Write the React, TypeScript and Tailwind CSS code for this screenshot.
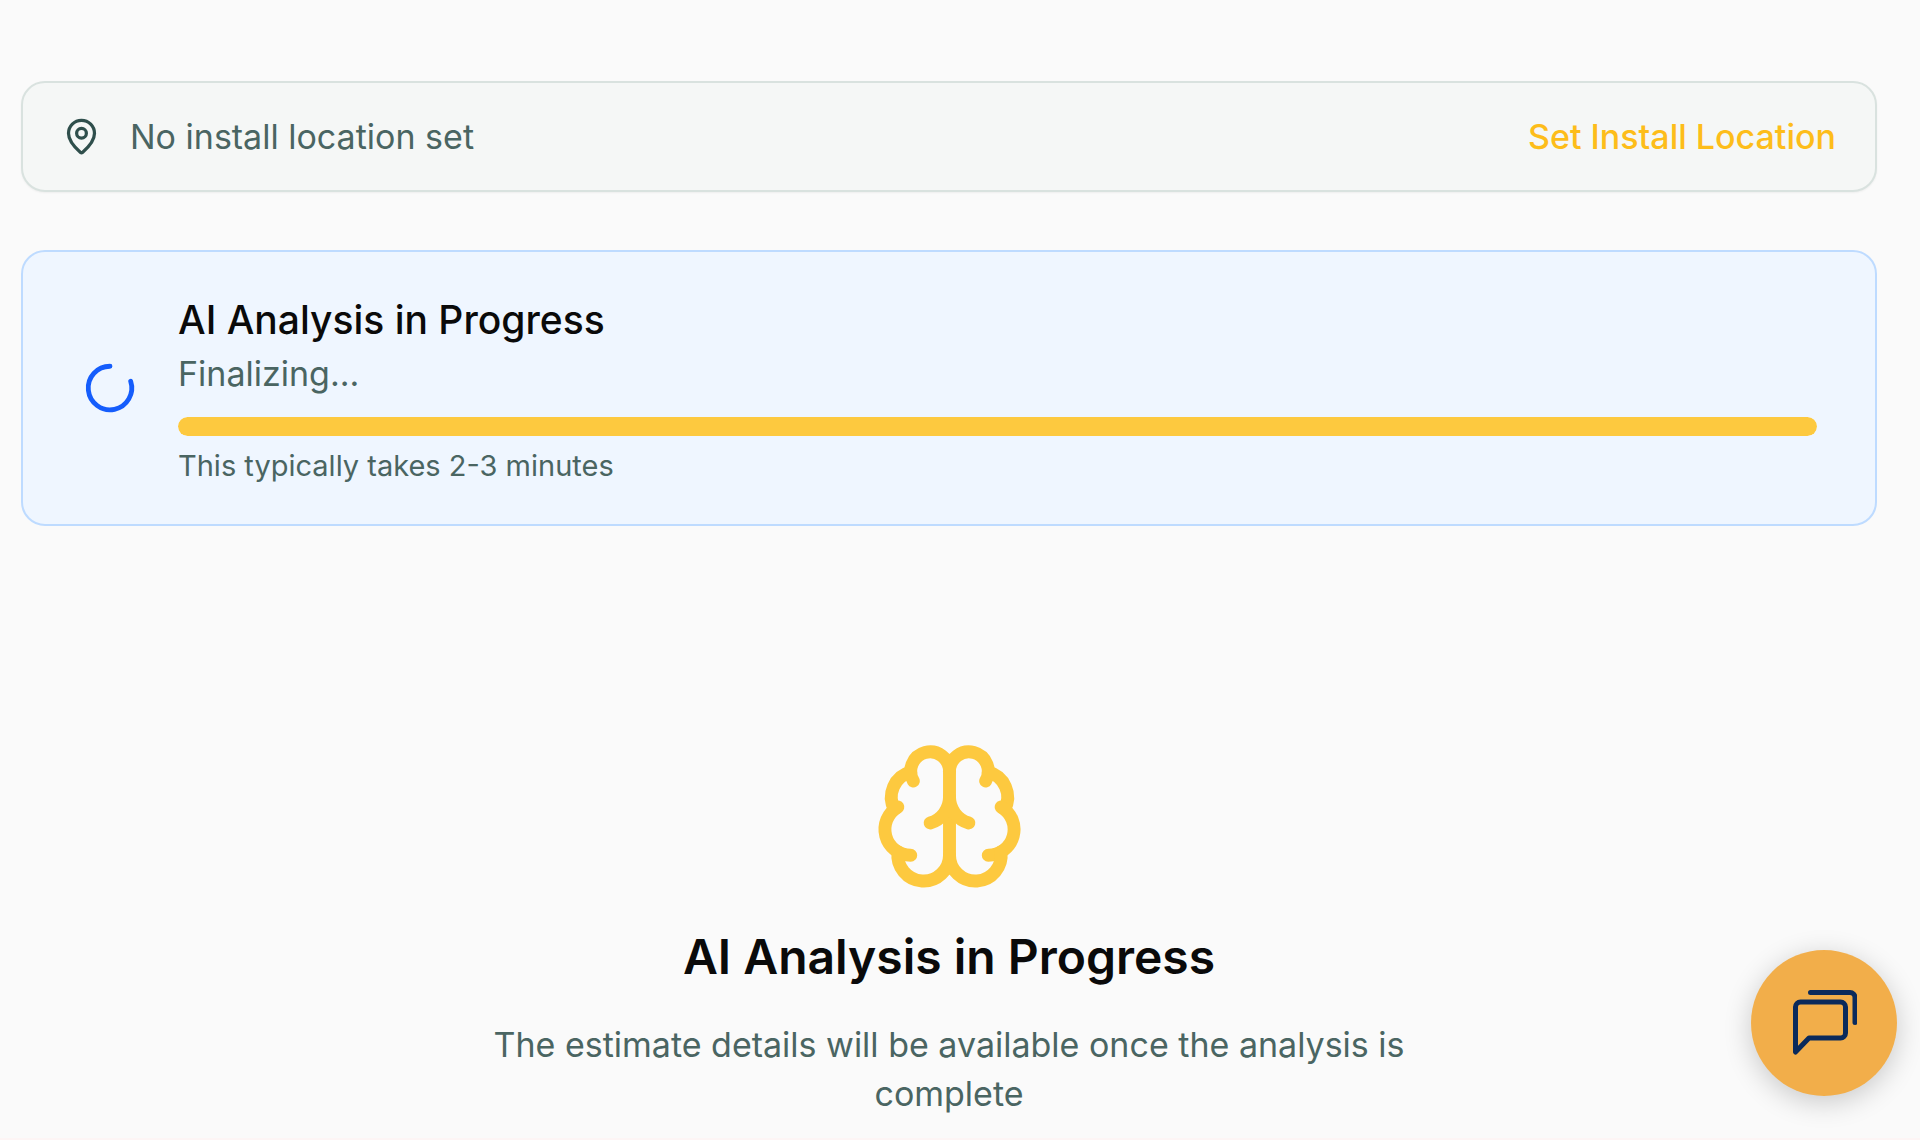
import React from 'react';
import { Brain, LoaderCircle, MapPin } from 'lucide-react';

const LocationBar: React.FC = () => {
  return (
    <div className="flex items-center justify-between gap-7 rounded-3xl border-2 border-[#d9e2df] bg-[#f5f7f6] px-[39px] py-[29px] shadow-xs">
      <div className="flex items-center gap-[29px]">
        <MapPin className="size-[39px] shrink-0 text-[#2f4f4c]" aria-hidden="true" />
        <span className="text-[34px] leading-[49px] text-[#4a6562]">No install location set</span>
      </div>
      <button type="button" className="text-[34px] font-medium leading-[49px] text-[#fdbd1a]">
        Set Install Location
      </button>
    </div>
  );
};

interface AnalysisCardProps {
  status: string;
  progress: number;
}

const AnalysisCard: React.FC<AnalysisCardProps> = ({ status, progress }) => {
  return (
    <div className="flex items-center gap-[39px] rounded-3xl border-2 border-[#bedbff] bg-[#eff6ff] px-[58px] py-[39px]">
      <LoaderCircle className="size-[58px] shrink-0 -rotate-18 text-[#155dfc]" aria-hidden="true" />
      <div className="flex-1">
        <h3 className="text-[39px] font-medium leading-[58px] text-[#0a0a0a]">AI Analysis in Progress</h3>
        <p className="text-[34px] leading-[49px] text-[#4a6562]">{status}</p>
        <div
          className="mt-[19px] h-[19px] overflow-hidden rounded-full bg-[#fdecc0]"
          role="progressbar"
          aria-label="Analysis progress"
          aria-valuenow={progress}
        >
          <div className="h-full rounded-full bg-[#fdc93f]" style={{ width: `${progress}%` }} />
        </div>
        <p className="mt-2.5 text-[29px] leading-[39px] text-[#4a6562]">This typically takes 2-3 minutes</p>
      </div>
    </div>
  );
};

const EmptyState: React.FC = () => {
  return (
    <div className="flex flex-col items-center pt-[213px] text-center">
      <Brain className="size-[155px] text-[#fdc93f]" aria-hidden="true" />
      <h2 className="mt-[29px] text-[48px] font-semibold leading-[68px] text-[#0a0a0a]">AI Analysis in Progress</h2>
      <p className="mt-[29px] max-w-[938px] text-[34px] leading-[49px] text-[#4a6562]">
        The estimate details will be available once the analysis is complete
      </p>
    </div>
  );
};

const ChatButton: React.FC = () => {
  return (
    <button
      type="button"
      aria-label="Open chat"
      className="fixed bottom-11 right-[23px] flex size-[146px] items-center justify-center rounded-full bg-[#f2ae4a] shadow-[0_6px_28px_rgba(0,0,0,0.2)]"
    >
      <svg
        className="h-[66px] w-[66px]"
        viewBox="0 0 66 66"
        fill="none"
        stroke="#0b2a5b"
        strokeWidth="5"
        strokeLinecap="round"
        strokeLinejoin="round"
        aria-hidden="true"
      >
        <path d="M4.5 62V17a5 5 0 0 1 5-5h40a5 5 0 0 1 5 5v26a5 5 0 0 1-5 5H18z" />
        <path d="M19.5 2.5h39.500a5 5 0 0 1 5 5v25" />
      </svg>
    </button>
  );
};

const App: React.FC = () => {
  return (
    <div className="min-h-screen border-b-4 border-[#fdf5f5] bg-[#fafafa] font-['Inter',sans-serif]">
      <main className="pb-5 pl-[21px] pr-[43px] pt-[81px]">
        <LocationBar />
        <div className="mt-[58px]">
          <AnalysisCard status="Finalizing..." progress={100} />
        </div>
        <EmptyState />
      </main>
      <ChatButton />
    </div>
  );
};

export default App;
